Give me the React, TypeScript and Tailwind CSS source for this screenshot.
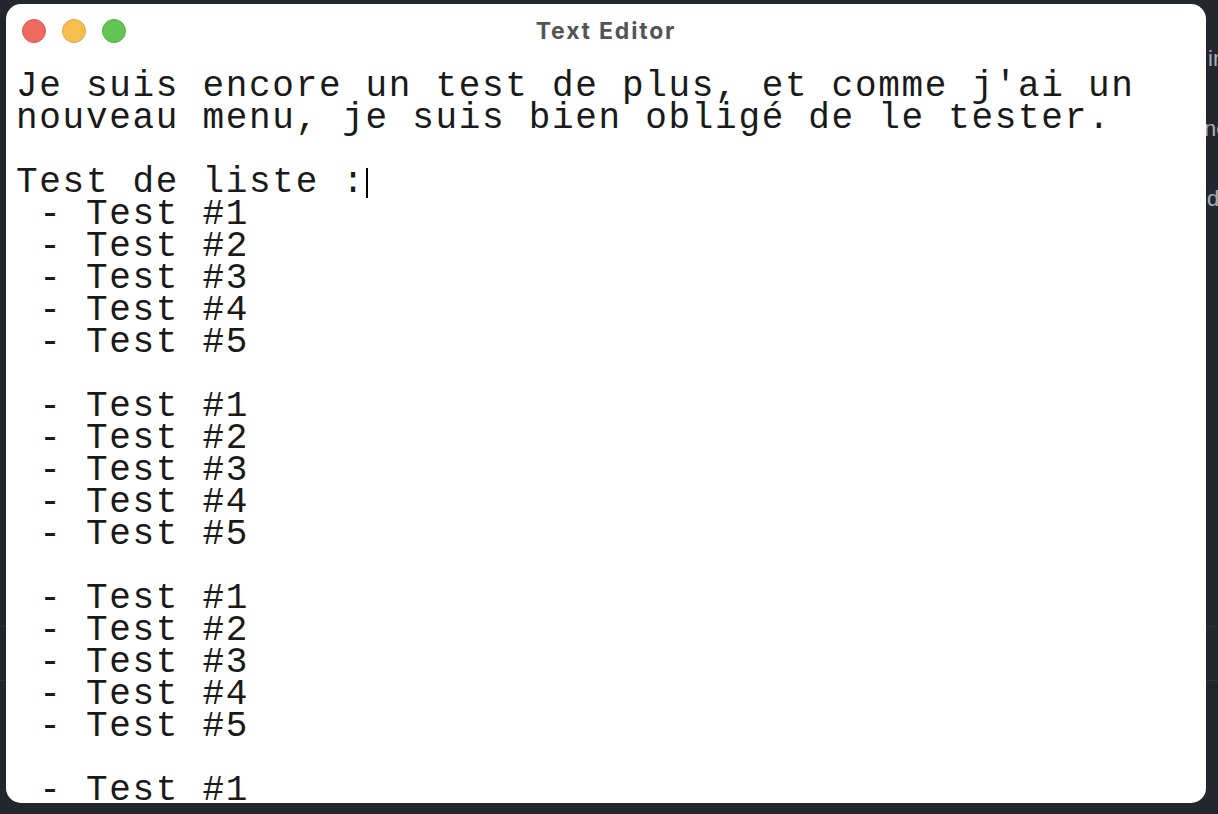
const lines: string[] = [
  "Je suis encore un test de plus, et comme j'ai un nouveau menu, je suis bien obligé de le tester.",
  "",
];

const list = [" - Test #1", " - Test #2", " - Test #3", " - Test #4", " - Test #5"];

function TrafficLights() {
  return (
    <div className="flex items-center gap-[16px]">
      <span className="w-[24px] h-[24px] rounded-full bg-[#ee6a5f] border border-[#d55a50]" />
      <span className="w-[24px] h-[24px] rounded-full bg-[#f5be4f] border border-[#dca63e]" />
      <span className="w-[24px] h-[24px] rounded-full bg-[#62c554] border border-[#52ad45]" />
    </div>
  );
}

export default function App() {
  const body = lines.join("\n");
  const after = [list, list, list].map((l) => l.join("\n")).join("\n\n") + "\n\n" + list[0];

  return (
    <div className="relative w-[1218px] h-[814px] overflow-hidden bg-[#23262c] font-['Liberation_Sans',sans-serif]">
      {/* desktop behind the window */}
      <div className="absolute left-0 right-0 top-[626px] h-px bg-[#2f333a]" />
      <div className="absolute left-0 right-0 top-[680px] h-px bg-[#2f333a]" />
      <div className="absolute left-[1204px] top-[46px] flex flex-col gap-[44px] text-[22px] leading-[26px] text-[#a9aeb6]">
        <span className="pl-[4px]">in</span>
        <span>nc</span>
        <span className="pl-[3px]">de</span>
      </div>

      <div className="relative pl-[6px] pt-[4px]">
        <div className="w-[1200px] h-[799px] rounded-[15px] bg-white overflow-hidden flex flex-col">
          <div className="relative h-[56px] shrink-0 flex items-center pl-[16px] pb-[2px]">
            <TrafficLights />
            <div className="absolute inset-x-0 top-[10px] text-center font-['Inter',sans-serif] font-bold text-[23px] tracking-[1.8px] text-[#545454]">
              Text Editor
            </div>
          </div>
          <div className="pl-[10px] pr-[10px] pt-[11px] font-['Liberation_Mono',monospace] text-[36px] leading-[32px] tracking-[1.7px] text-[#1a1a1a] whitespace-pre-wrap">
            {body}
            {"\n"}
            <span>
              Test de liste :
              <span className="inline-block w-[2px] h-[30px] bg-black align-[-6px]" />
            </span>
            {"\n"}
            {after}
          </div>
        </div>
      </div>
    </div>
  );
}
